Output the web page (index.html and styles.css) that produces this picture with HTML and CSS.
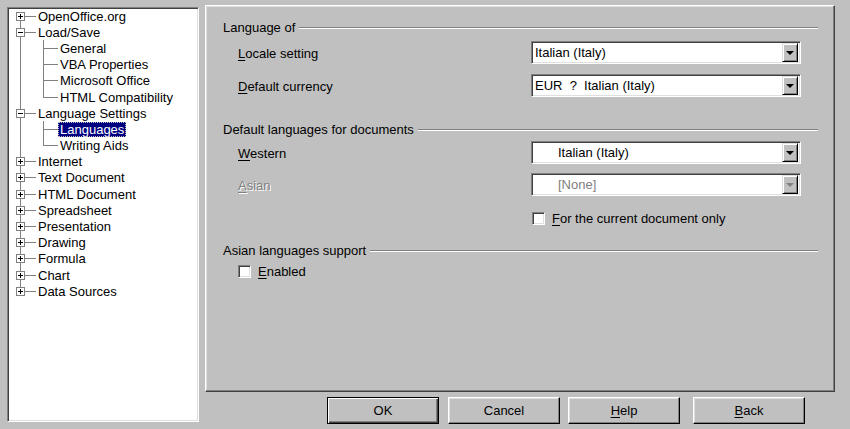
FILE: index.html
```html
<!DOCTYPE html>
<html lang="en">
<head>
  <meta charset="UTF-8">
  <title>Options - Language Settings - Languages</title>
  <link rel="stylesheet" href="styles.css">
</head>
<body>
  <div class="dialog">
    <!-- options tree -->
    <div class="tree">
      <div class="tree-list">
        <div class="row"><svg class="box" width="9" height="9"><rect x="0.5" y="0.5" width="8" height="8" fill="#fff" stroke="#808080"/><path d="M2 4.5h5M4.5 2v5" stroke="#000"/></svg><span class="twig"></span><span class="label">OpenOffice.org</span></div>
        <div class="row"><svg class="box" width="9" height="9"><rect x="0.5" y="0.5" width="8" height="8" fill="#fff" stroke="#808080"/><path d="M2 4.5h5" stroke="#000"/></svg><span class="twig"></span><span class="label">Load/Save</span></div>
        <div class="children">
          <div class="row child"><span class="twig"></span><span class="label">General</span></div>
          <div class="row child"><span class="twig"></span><span class="label">VBA Properties</span></div>
          <div class="row child"><span class="twig"></span><span class="label">Microsoft Office</span></div>
          <div class="row child"><span class="twig"></span><span class="label">HTML Compatibility</span></div>
        </div>
        <div class="row"><svg class="box" width="9" height="9"><rect x="0.5" y="0.5" width="8" height="8" fill="#fff" stroke="#808080"/><path d="M2 4.5h5" stroke="#000"/></svg><span class="twig"></span><span class="label">Language Settings</span></div>
        <div class="children">
          <div class="row child"><span class="twig"></span><span class="label selected">Languages</span></div>
          <div class="row child"><span class="twig"></span><span class="label">Writing Aids</span></div>
        </div>
        <div class="row"><svg class="box" width="9" height="9"><rect x="0.5" y="0.5" width="8" height="8" fill="#fff" stroke="#808080"/><path d="M2 4.5h5M4.5 2v5" stroke="#000"/></svg><span class="twig"></span><span class="label">Internet</span></div>
        <div class="row"><svg class="box" width="9" height="9"><rect x="0.5" y="0.5" width="8" height="8" fill="#fff" stroke="#808080"/><path d="M2 4.5h5M4.5 2v5" stroke="#000"/></svg><span class="twig"></span><span class="label">Text Document</span></div>
        <div class="row"><svg class="box" width="9" height="9"><rect x="0.5" y="0.5" width="8" height="8" fill="#fff" stroke="#808080"/><path d="M2 4.5h5M4.5 2v5" stroke="#000"/></svg><span class="twig"></span><span class="label">HTML Document</span></div>
        <div class="row"><svg class="box" width="9" height="9"><rect x="0.5" y="0.5" width="8" height="8" fill="#fff" stroke="#808080"/><path d="M2 4.5h5M4.5 2v5" stroke="#000"/></svg><span class="twig"></span><span class="label">Spreadsheet</span></div>
        <div class="row"><svg class="box" width="9" height="9"><rect x="0.5" y="0.5" width="8" height="8" fill="#fff" stroke="#808080"/><path d="M2 4.5h5M4.5 2v5" stroke="#000"/></svg><span class="twig"></span><span class="label">Presentation</span></div>
        <div class="row"><svg class="box" width="9" height="9"><rect x="0.5" y="0.5" width="8" height="8" fill="#fff" stroke="#808080"/><path d="M2 4.5h5M4.5 2v5" stroke="#000"/></svg><span class="twig"></span><span class="label">Drawing</span></div>
        <div class="row"><svg class="box" width="9" height="9"><rect x="0.5" y="0.5" width="8" height="8" fill="#fff" stroke="#808080"/><path d="M2 4.5h5M4.5 2v5" stroke="#000"/></svg><span class="twig"></span><span class="label">Formula</span></div>
        <div class="row"><svg class="box" width="9" height="9"><rect x="0.5" y="0.5" width="8" height="8" fill="#fff" stroke="#808080"/><path d="M2 4.5h5M4.5 2v5" stroke="#000"/></svg><span class="twig"></span><span class="label">Chart</span></div>
        <div class="row"><svg class="box" width="9" height="9"><rect x="0.5" y="0.5" width="8" height="8" fill="#fff" stroke="#808080"/><path d="M2 4.5h5M4.5 2v5" stroke="#000"/></svg><span class="twig"></span><span class="label">Data Sources</span></div>
      </div>
    </div>

    <div class="main">
      <div class="panel">
        <div class="group-title">Language of</div>
        <div class="field first">
          <div class="field-label"><u>L</u>ocale setting</div>
          <div class="combo"><span class="value">Italian (Italy)</span><span class="drop"><i class="arrow"></i></span></div>
        </div>
        <div class="field">
          <div class="field-label"><u>D</u>efault currency</div>
          <div class="combo"><span class="value">EUR&nbsp; ?&nbsp; Italian (Italy)</span><span class="drop"><i class="arrow"></i></span></div>
        </div>

        <div class="group-title second">Default languages for documents</div>
        <div class="field western">
          <div class="field-label"><u>W</u>estern</div>
          <div class="combo"><span class="value indent">Italian (Italy)</span><span class="drop"><i class="arrow"></i></span></div>
        </div>
        <div class="field asian">
          <div class="field-label disabled"><u>A</u>sian</div>
          <div class="combo off"><span class="value indent">[None]</span><span class="drop"><i class="arrow"></i></span></div>
        </div>
        <div class="check doc-only"><span class="checkbox"></span><span><u>F</u>or the current document only</span></div>

        <div class="group-title third">Asian languages support</div>
        <div class="check enabled"><span class="checkbox"></span><span><u>E</u>nabled</span></div>
      </div>

      <div class="buttons">
        <div class="btn default">OK</div>
        <div class="btn cancel">Cancel</div>
        <div class="btn help"><u>H</u>elp</div>
        <div class="btn back"><u>B</u>ack</div>
      </div>
    </div>
  </div>
</body>
</html>
```

FILE: styles.css
```css
html, body {
  margin: 0;
  background: #c0c0c0;
}

body {
  width: 850px;
  height: 429px;
  overflow: hidden;
  font-family: "Liberation Sans", Arial, sans-serif;
  font-size: 13px;
  color: #000;
}

u {
  text-decoration: underline;
  text-underline-offset: 2px;
}

.dialog {
  display: flex;
  align-items: flex-start;
  padding: 5px 0 0 7px;
}

/* tree */
.tree {
  margin-top: 2px;
  width: 192px;
  height: 415px;
  box-sizing: border-box;
  background: #fff;
  border: 1px solid;
  border-color: #808080 #fff #fff #808080;
  box-shadow: inset 1px 1px #404040, inset -1px -1px #dfdfdf;
}

.tree-list {
  position: relative;
}

.tree-list::before {
  content: '';
  position: absolute;
  left: 12px;
  top: 8px;
  bottom: 8px;
  width: 1px;
  background: #808080;
}

.row {
  display: flex;
  align-items: center;
  height: 16.2px;
}

.box {
  margin-left: 8px;
  position: relative;
  z-index: 1;
  flex: none;
}

.twig {
  width: 11px;
  height: 1px;
  background: #808080;
  flex: none;
}

.label {
  padding: 0 2px;
  line-height: 15px;
  white-space: nowrap;
}

.children {
  position: relative;
}

.children::before {
  content: '';
  position: absolute;
  left: 35px;
  top: 0;
  bottom: 8px;
  width: 1px;
  background: #808080;
}

.child .twig {
  margin-left: 35px;
  width: 15px;
}

.selected {
  background: #000080;
  color: #fff;
  outline: 1px dotted #c0c0c0;
  outline-offset: -1px;
}

/* right side */
.main {
  margin-left: 6px;
  width: 630px;
}

.panel {
  height: 387px;
  box-sizing: border-box;
  padding: 13px 16px 0 17px;
  border: 1px solid;
  border-color: #fff #404040 #404040 #fff;
  box-shadow: inset -1px -1px #808080, inset 1px 1px #dfdfdf;
}

.group-title {
  display: flex;
  align-items: center;
  height: 16px;
  white-space: nowrap;
}

.group-title::after {
  content: '';
  flex: 1;
  margin: 2px 0 0 4px;
  border-top: 1px solid #808080;
  border-bottom: 1px solid #fff;
}

.group-title.second { margin-top: 24px; }
.group-title.third { margin-top: 16px; }

.field {
  display: flex;
  align-items: center;
  height: 23px;
  margin-top: 10px;
}

.field.first { margin-top: 6px; }
.field.western { margin-top: 4px; }
.field.asian { margin-top: 9px; }

.field-label {
  width: 308px;
  padding-left: 15px;
  box-sizing: border-box;
  padding-top: 1px;
}

.disabled {
  color: #808080;
  text-shadow: 1px 1px 0 #fff;
}

.combo {
  width: 270px;
  height: 23px;
  box-sizing: border-box;
  display: flex;
  align-items: center;
  background: #fff;
  border: 1px solid;
  border-color: #808080 #fff #fff #808080;
  box-shadow: inset 1px 1px #404040, inset -1px -1px #dfdfdf;
  padding: 1px 2px 1px 2px;
}

.value {
  flex: 1;
  padding-left: 1px;
  white-space: nowrap;
}

.value.indent {
  padding-left: 24px;
}

.combo.off .value {
  color: #808080;
}

.drop {
  width: 16px;
  height: 19px;
  box-sizing: border-box;
  background: #c0c0c0;
  border: 1px solid;
  border-color: #dfdfdf #000 #000 #dfdfdf;
  box-shadow: inset 1px 1px #fff, inset -1px -1px #808080;
  display: flex;
  align-items: center;
  justify-content: center;
}

.arrow {
  width: 0;
  height: 0;
  border-left: 4px solid transparent;
  border-right: 4px solid transparent;
  border-top: 4px solid #000;
  margin-top: 1px;
}

.combo.off .arrow {
  border-top-color: #808080;
}

.check {
  display: flex;
  align-items: center;
  height: 16px;
}

.checkbox {
  width: 13px;
  height: 13px;
  box-sizing: border-box;
  background: #fff;
  border: 1px solid;
  border-color: #808080 #fff #fff #808080;
  box-shadow: inset 1px 1px #404040, inset -1px -1px #dfdfdf;
  margin-right: 7px;
  flex: none;
}

.doc-only {
  margin-top: 14px;
  padding-left: 309px;
}

.enabled {
  margin-top: 5px;
  padding-left: 15px;
}

/* buttons */
.buttons {
  display: flex;
  margin-top: 5px;
  padding-left: 122px;
}

.btn {
  width: 112px;
  height: 27px;
  box-sizing: border-box;
  display: flex;
  align-items: center;
  justify-content: center;
  border: 1px solid;
  border-color: #fff #000 #000 #fff;
  box-shadow: inset -1px -1px #808080, inset 1px 1px #dfdfdf;
}

.btn.default {
  border: 1px solid #000;
  box-shadow: inset 1px 1px #fff, inset -1px -1px #404040, inset -2px -2px #808080;
}

.btn.cancel { margin-left: 9px; }
.btn.help { margin-left: 8px; }
.btn.back { margin-left: 13px; }
```
